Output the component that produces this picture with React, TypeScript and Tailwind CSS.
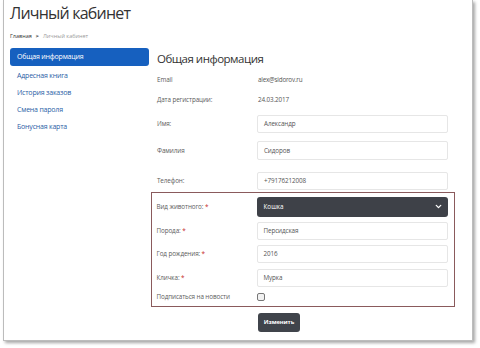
import { ChevronDown } from "lucide-react";

const menu = ["Адресная книга", "История заказов", "Смена пароля", "Бонусная карта"];

function Label({ text, req }: { text: string; req?: boolean }) {
  return (
    <div className="w-[100px] shrink-0 text-[6.3px] tracking-[-0.1px] text-[#5c5c5c]">
      {text}
      {req && <span className="text-[#c62828]"> *</span>}
    </div>
  );
}

function Field({ value }: { value: string }) {
  return (
    <div className="w-[191px] h-full border border-[#e6e6e6] rounded-[2px] flex items-center pl-[6px] text-[6.3px] tracking-[-0.1px] text-[#555]">
      {value}
    </div>
  );
}

export default function App() {
  return (
    <div className="w-[480px] h-[348px] bg-white overflow-hidden" style={{ fontFamily: '"Open Sans", "DejaVu Sans", sans-serif' }}>
      <div className="ml-[3px] w-[470px] h-[341px] bg-white border-l border-r border-b border-[#bcbcbc] shadow-[2px_2px_3px_rgba(0,0,0,0.35)] pl-[6px]">
        <h1 className="pt-[2px] text-[16px] leading-[23px] tracking-[-0.8px] text-[#333]">Личный кабинет</h1>
        <div className="mt-[5px] h-[12px] flex items-center gap-[4px] text-[5.5px]">
          <span className="text-[#333]">Главная</span>
          <span className="text-[#333] font-bold">&gt;</span>
          <span className="text-[#999]">Личный кабинет</span>
        </div>

        <div className="mt-[6px] flex gap-[8px]">
          {/* Меню */}
          <div className="w-[139px] shrink-0">
            <div className="h-[18px] rounded-[3px] bg-[#1660bf] text-white text-[7px] tracking-[-0.2px] flex items-center pl-[7px]">
              Общая информация
            </div>
            <div className="mt-[2px]">
              {menu.map((m) => (
                <div key={m} className="h-[17px] flex items-center pl-[7px] text-[7px] tracking-[-0.2px] text-[#2a5ea6]">
                  {m}
                </div>
              ))}
            </div>
          </div>

          {/* Форма */}
          <div className="flex-1">
            <h2 className="h-[22px] flex items-center text-[11.5px] tracking-[-0.5px] text-[#333]">Общая информация</h2>
            <div className="h-[20px] flex items-center">
              <Label text="Email" />
              <span className="text-[6.3px] tracking-[-0.2px] text-[#555] pl-[1px]">alex@sidorov.ru</span>
            </div>
            <div className="h-[20px] flex items-center">
              <Label text="Дата регистрации:" />
              <span className="text-[6.3px] tracking-[-0.1px] text-[#555] pl-[1px]">24.03.2017</span>
            </div>
            <div className="mt-[5px] h-[18px] flex items-center">
              <Label text="Имя:" />
              <Field value="Александр" />
            </div>
            <div className="mt-[8px] h-[19px] flex items-center">
              <Label text="Фамилия" />
              <Field value="Сидоров" />
            </div>
            <div className="mt-[12px] h-[18px] flex items-center">
              <Label text="Телефон:" />
              <Field value="+79176212008" />
            </div>

            <div className="mt-[2px] -ml-[6px] w-[304px] border-[1.5px] border-[#8a5a5c] pl-[4.5px] pt-[3.5px] pb-[1px]">
              <div className="h-[20px] flex items-center">
                <Label text="Вид животного:" req />
                <div className="w-[191px] h-full rounded-[3px] bg-[#3e4148] flex items-center justify-between pl-[7px] pr-[5px] text-[6.3px] text-white">
                  Кошка
                  <ChevronDown size={9} strokeWidth={3.5} color="#fff" />
                </div>
              </div>
              <div className="mt-[5px] h-[18px] flex items-center">
                <Label text="Порода:" req />
                <Field value="Персидская" />
              </div>
              <div className="mt-[5px] h-[18px] flex items-center">
                <Label text="Год рождения:" req />
                <Field value="2016" />
              </div>
              <div className="mt-[6px] h-[18px] flex items-center">
                <Label text="Кличка:" req />
                <Field value="Мурка" />
              </div>
              <div className="mt-[3px] h-[15px] flex items-center">
                <Label text="Подписаться на новости" />
                <div className="w-[8px] h-[8px] border border-[#777] rounded-[2px] bg-[#f2f2f2]" />
              </div>
            </div>

            <div className="mt-[6px] ml-[101px] w-[42px] h-[19px] rounded-[3px] bg-[#40444b] flex items-center justify-center text-[5.8px] tracking-[-0.1px] font-bold text-white">
              Изменить
            </div>
          </div>
        </div>
      </div>
    </div>
  );
}
